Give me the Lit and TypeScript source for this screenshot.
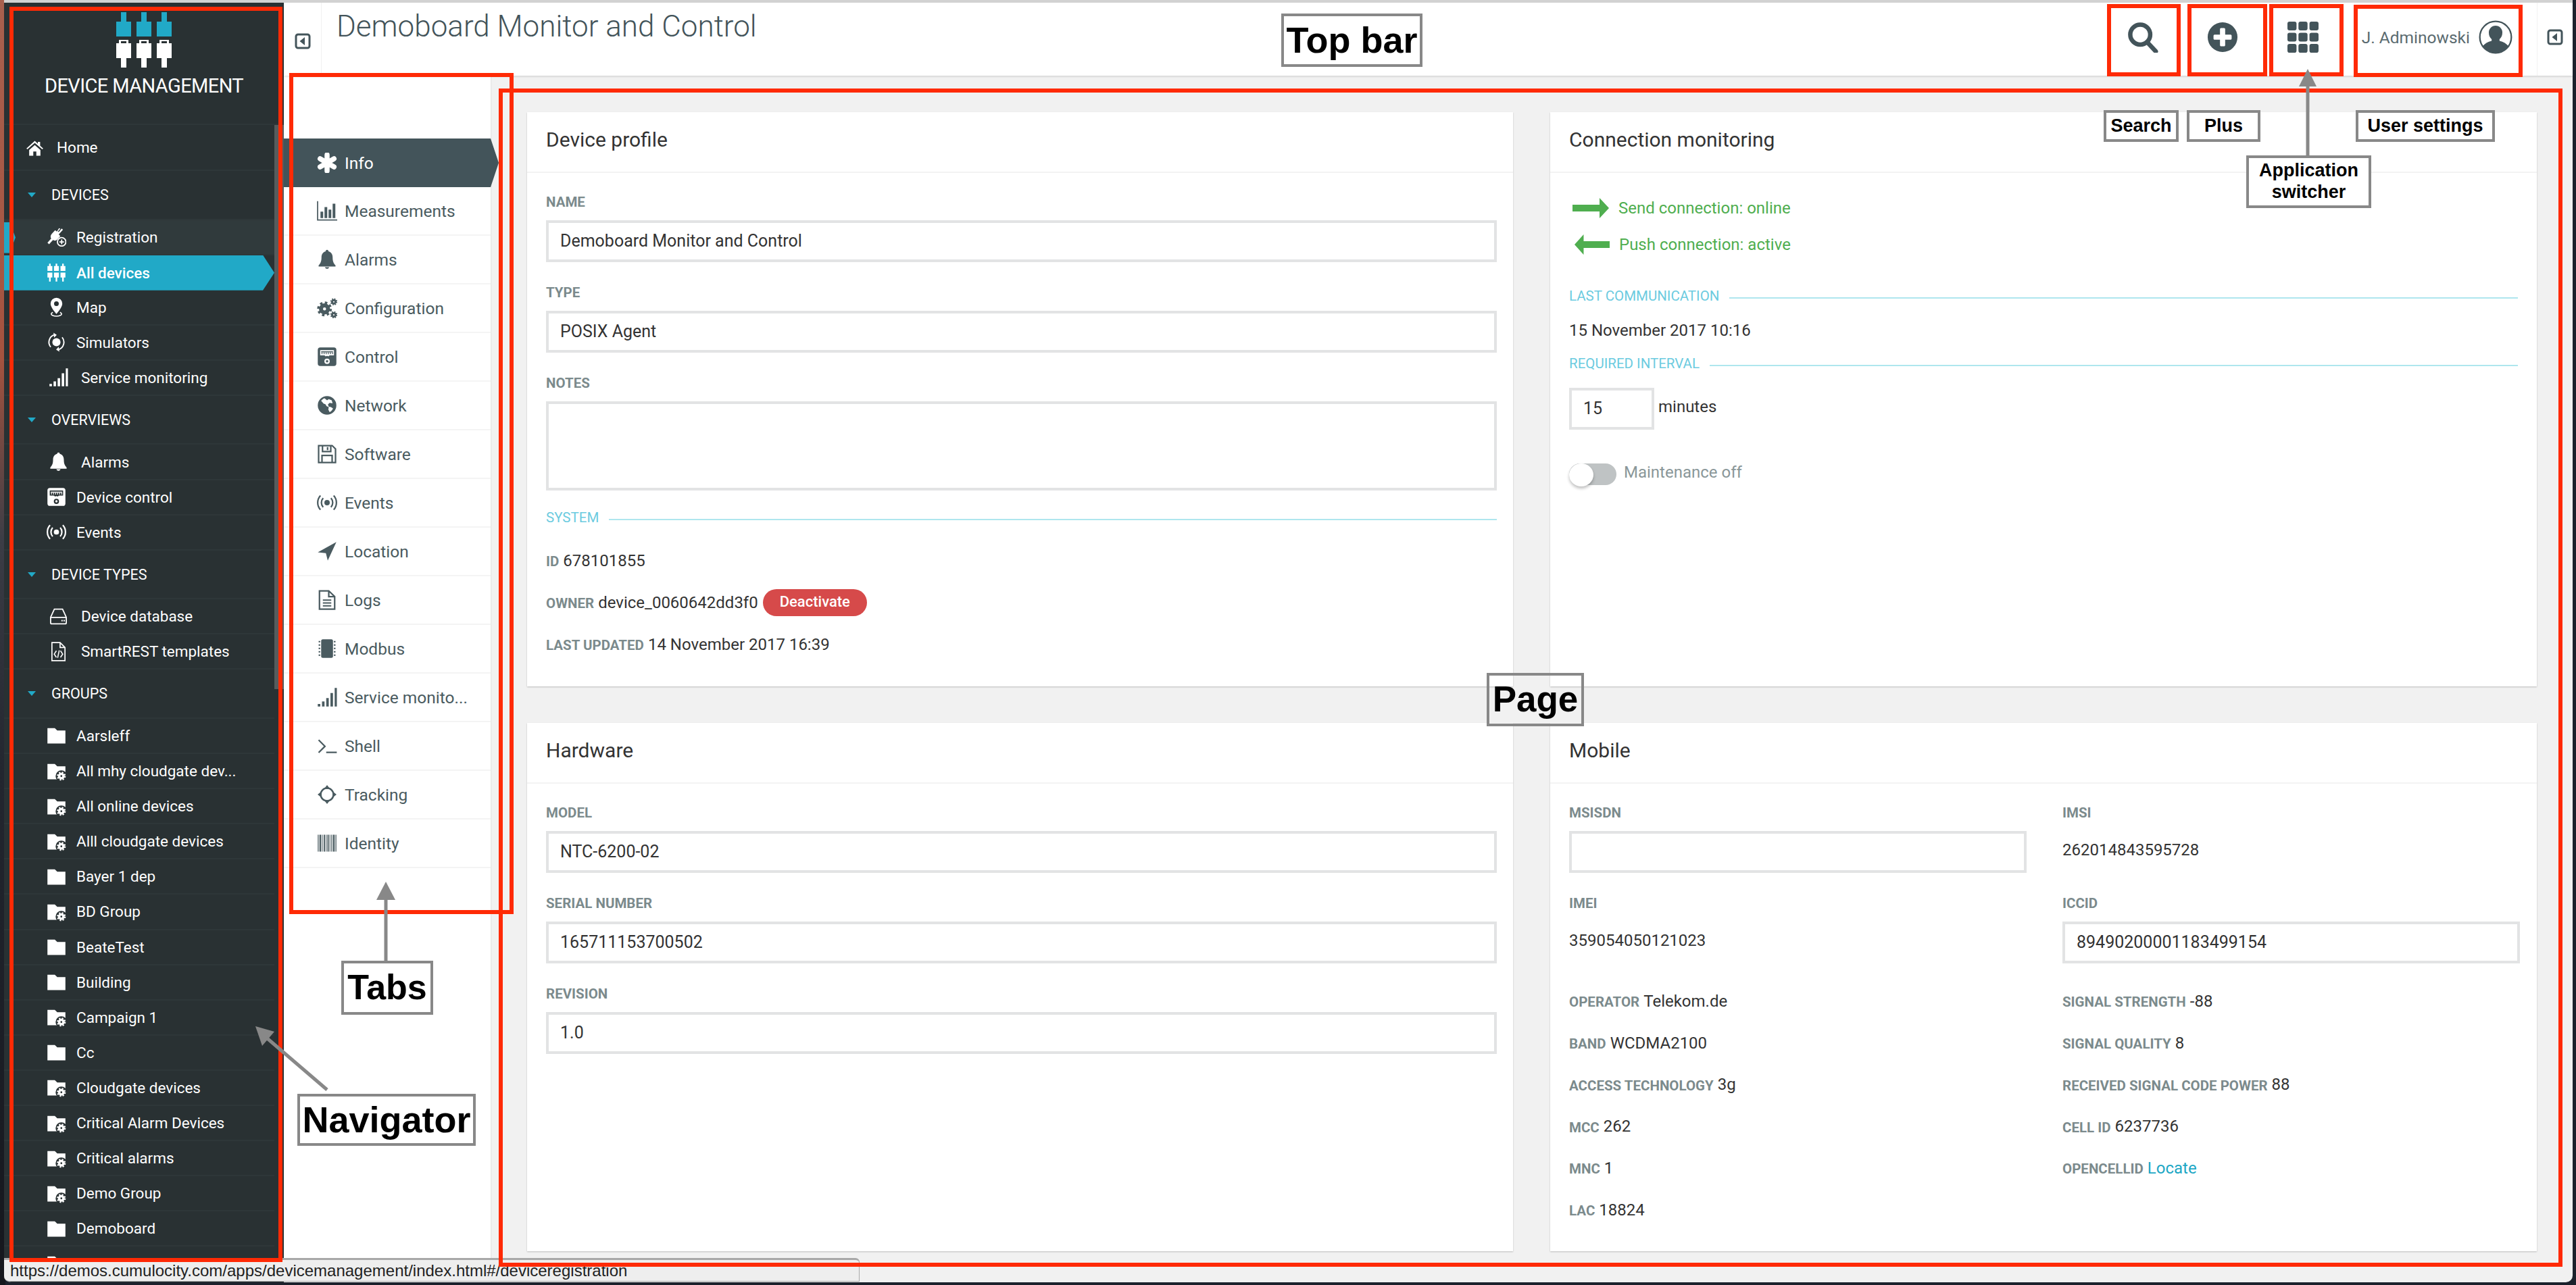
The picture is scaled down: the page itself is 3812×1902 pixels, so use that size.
import { LitElement, html, css, svg } from "lit";
import { customElement } from "lit/decorators.js";

const gear = (x: number, y: number, r: number) => svg`
  <circle cx=${x} cy=${y} r=${r * 0.6} fill="none" stroke="currentColor" stroke-width=${r * 0.68}></circle>
  <circle cx=${x} cy=${y} r=${r * 1.04} fill="none" stroke="currentColor" stroke-width=${r * 0.42} stroke-dasharray=${r * 0.41}></circle>`;

const folder = svg`<path d="M1 3h9l3 3h10v16H1z"></path>`;

const icons: Record<string, unknown> = {
  home: svg`<path d="M12 3.2 1 13l1.2 1.3L12 5.8l9.8 8.5L23 13l-4-3.5V4.4h-3v2.5zM4.6 15v7.6H10V17h4v5.6h5.4V15L12 8.6z"></path>`,
  plug: svg`<path d="M15.2 1.4 12.6 5.6 10.4 4 6.2 8.4c-1.6 1.700-1.700 3.900-.6 5.600L1 19.200 3 21l4.800-5c1.600 1 3.700.9 5.200-.6l3.800-4.200-2-2L20 3.400l-1.600-1.500-3.600 4.300-1-.8 3-3.400z"></path>
    <circle cx="18.4" cy="18.2" r="5.2" fill="none" stroke="currentColor" stroke-width="1.5"></circle>
    <path d="M17.7 15.4h1.500v2.100h2.100V19h-2.100v2.100h-1.500V19h-2.100v-1.500h2.100z"></path>`,
  devices: svg`<path d="M3 1h2v3h2v6H1V4h2zM11 1h2v3h2v6H9V4h2zM19 1h2v3h2v6h-6V4h2zM1 12h6v6H5v5H3v-5H1zM9 12h6v6h-2v5h-2v-5H9zM17 12h6v6h-2v5h-2v-5h-2z"></path>`,
  pin: svg`<path fill-rule="evenodd" d="M12 .6a7.200 7.200 0 0 0-7.200 7.200c0 4.200 5.200 10.200 7.200 12.600 2-2.400 7.200-8.400 7.200-12.600A7.200 7.200 0 0 0 12 .6zm0 4.400a2.900 2.900 0 1 1 0 5.800 2.900 2.900 0 0 1 0-5.800z"></path>
    <path d="M7.600 18.400c-1.300.6-2 1.300-2 2.100 0 1.400 2.900 2.600 6.400 2.600s6.400-1.200 6.400-2.600c0-.8-.7-1.500-2-2.100" fill="none" stroke="currentColor" stroke-width="1.300"></path>`,
  sim: svg`<circle cx="12" cy="12" r="5"></circle>
    <path d="M5 18A9.600 9.600 0 0 1 9 3M19 6a9.600 9.600 0 0 1-4 15" fill="none" stroke="currentColor" stroke-width="1.600"></path>
    <path d="m8.400.4 4 2.600-3.200 3.400zM15.600 23.600l-4-2.600 3.200-3.400z"></path>`,
  signal: svg`<path d="M1 20h3v3H1zM6 17h3v6H6zM11 13h3v10h-3zM16 7h3v16h-3zM21 1h2.600v22H21z"></path>`,
  bell: svg`<path d="M12 .6c-1 0-1.600.7-1.600 1.700C7 3.200 5.400 6 5.400 9.400c0 5-1.200 7.400-3.400 9.600v1.400h20V19c-2.200-2.200-3.400-4.600-3.400-9.600 0-3.400-1.600-6.200-5-7.100C13.600 1.300 13 .6 12 .6z"></path>
    <path d="M9.400 21.200a2.700 2.700 0 0 0 5.200 0z"></path>`,
  control: svg`<path fill-rule="evenodd" d="M4 1h16a3 3 0 0 1 3 3v16a3 3 0 0 1-3 3H4a3 3 0 0 1-3-3V4a3 3 0 0 1 3-3zm-.2 3.200v6.200h5.200l1.400 1.200a2.600 2.600 0 0 1 3.200 0l1.400-1.200h5.200V4.200zM12 14.200a3.200 3.200 0 1 0 0 6.400 3.200 3.200 0 0 0 0-6.400z"></path>
    <circle cx="12" cy="17.400" r="1.400"></circle>
    <path d="M5 5.500h14v1.300H5zM5.500 7h1v2h-1zM8 7h1v2H8zM10.500 7h1v2h-1zM13 7h1v2h-1zM15.500 7h1v2h-1zM18 7h1v2h-1z"></path>`,
  events: svg`<circle cx="12" cy="12" r="3.200"></circle>
    <path d="M7.400 6.600a8 8 0 0 0 0 10.800M16.600 6.600a8 8 0 0 1 0 10.800M4.200 3.600a12.400 12.400 0 0 0 0 16.800M19.800 3.600a12.400 12.400 0 0 1 0 16.800" fill="none" stroke="currentColor" stroke-width="1.800"></path>`,
  hdd: svg`<path d="M7 3h10l4.600 10v6.600a1.400 1.400 0 0 1-1.400 1.400H3.800a1.400 1.400 0 0 1-1.400-1.400V13zM2.800 13.200h18.400" fill="none" stroke="currentColor" stroke-width="1.500"></path>
    <path d="M15.600 16.200h1.600v1.800h-1.600zM18.200 16.200h1.600v1.800h-1.600z"></path>`,
  code: svg`<path d="M14 1H4v22h16V7zM14 1v6h6" fill="none" stroke="currentColor" stroke-width="1.400"></path>
    <path d="M9.500 11 6.800 15l2.700 4M14.500 11l2.700 4-2.700 4M13 10.400l-2 9.200" fill="none" stroke="currentColor" stroke-width="1.300"></path>`,
  folder,
  smart: svg`${folder}<circle cx="18" cy="18" r="7" style="fill:var(--cut,#293133)"></circle>${gear(18, 18, 4.4)}`,
  asterisk: svg`<path d="M12 2.500v19M3.800 7.200l16.400 9.600M20.200 7.200 3.800 16.800" fill="none" stroke="currentColor" stroke-width="6" stroke-linecap="round"></path>`,
  chart: svg`<path d="M.8 .5v22.300H24" fill="none" stroke="currentColor" stroke-width="1.400"></path>
    <path d="M4.200 13h3.200v7.500H4.200zM9 7.500h3.200v13H9zM13.800 10.500H17v10h-3.200zM18.600 3.500h3.200v17h-3.200z"></path>`,
  gears: svg`${gear(9, 13, 7)}${gear(20, 4.6, 3.4)}${gear(20, 20, 3.4)}`,
  globe: svg`<path fill-rule="evenodd" d="M12 1a11 11 0 1 1 0 22 11 11 0 0 1 0-22zM5 6.500l3 3.500 2 .5 1.500 2.500 2.500 1-.5 3 1.500 3c2-1 3.600-3 4-4.500l-2.500-1.500-2.500-.5-1-2.500 2-2 3.500.5-1-3.500-3.500-1.500-2 1.500L9 3.500C7.500 4 6 5.200 5 6.500z"></path>`,
  floppy: svg`<path d="M2 2h16l4 4v16H2zM6.600 2v7h9.800V2M6 22v-8.400h12V22M12.600 3.800v3.600" fill="none" stroke="currentColor" stroke-width="1.800"></path>`,
  arrow: svg`<path d="M23 1 1 13.200l9.600 1 2.200 8.800z"></path>`,
  file: svg`<path d="M14 1.200H3v21.600h18V8zM14 1.200V8h7" fill="none" stroke="currentColor" stroke-width="1.800"></path>
    <path d="M7 11.400h10v1.600H7zM7 14.800h10v1.600H7zM7 18.200h10v1.600H7z"></path>`,
  chip: svg`<rect x="5" y="1" width="14" height="22" rx="2"></rect>
    <path d="M2 3h2v1.500H2zM2 7h2v1.500H2zM2 11h2v1.500H2zM2 15h2v1.500H2zM2 19h2v1.500H2zM20 3h2v1.500h-2zM20 7h2v1.500h-2zM20 11h2v1.500h-2zM20 15h2v1.500h-2zM20 19h2v1.500h-2z"></path>`,
  shell: svg`<path d="m2 5 7.500 7.500L2 20" fill="none" stroke="currentColor" stroke-width="1.800"></path><path d="M11 18.800h12.500v1.800H11z"></path>`,
  track: svg`<circle cx="12" cy="12" r="7.600" fill="none" stroke="currentColor" stroke-width="2"></circle>
    <path d="m12 .8 3.600 4.600H8.400zM12 23.200l3.600-4.600H8.400zM.8 12l4.600-3.600v7.200zM23.200 12l-4.600-3.600v7.200z"></path>`,
  barcode: svg`<path d="M1 2h1v20H1zM3 2h2v20H3zM6 2h.8v20H6zM8 2h1.500v20H8zM10.500 2h.8v20h-.8zM12.400 2h1.600v20h-1.600zM15 2h.8v20H15zM17 2h1v20h-1zM19 2h2v20h-2zM22 2h1v20h-1z"></path>`,
  search: svg`<circle cx="10" cy="10" r="7.700" fill="none" stroke="currentColor" stroke-width="3.400"></circle><path d="m15.500 16 6.500 7" fill="none" stroke="currentColor" stroke-width="3.400" stroke-linecap="round"></path>`,
  plus: svg`<path fill-rule="evenodd" d="M12 .5a11.500 11.500 0 1 1 0 23 11.500 11.500 0 0 1 0-23zM10 5.800v4.200H5.800a.8.8 0 0 0-.8.8v2.400c0 .4.400.8.800.8H10v4.200c0 .4.400.8.800.8h2.400c.4 0 .8-.4.800-.8V14h4.200c.4 0 .8-.4.800-.8v-2.400a.8.8 0 0 0-.8-.8H14V5.800a.8.8 0 0 0-.8-.8h-2.400a.8.8 0 0 0-.8.8z"></path>`,
  grid: svg`<rect x="0" y="0" width="7" height="6.800" rx="1.600"></rect><rect x="8.500" y="0" width="7" height="6.800" rx="1.600"></rect><rect x="17" y="0" width="7" height="6.800" rx="1.600"></rect>
    <rect x="0" y="8.600" width="7" height="6.800" rx="1.600"></rect><rect x="8.500" y="8.600" width="7" height="6.800" rx="1.600"></rect><rect x="17" y="8.600" width="7" height="6.800" rx="1.600"></rect>
    <rect x="0" y="17.200" width="7" height="6.800" rx="1.600"></rect><rect x="8.500" y="17.200" width="7" height="6.800" rx="1.600"></rect><rect x="17" y="17.200" width="7" height="6.800" rx="1.600"></rect>`,
  user: svg`<circle cx="12" cy="12" r="11.200" fill="none" stroke="currentColor" stroke-width="1.100"></circle>
    <path d="M12 3.800a4.800 4.800 0 0 1 4.800 5.200c0 2-.9 3.500-2 4.400v1.200c2.800.7 5 2 6.200 3.600A11 11 0 0 1 12 23a11 11 0 0 1-9-4.800c1.200-1.600 3.400-2.900 6.200-3.600v-1.200c-1.100-.9-2-2.400-2-4.400A4.800 4.800 0 0 1 12 3.800z"></path>`,
  collapse: svg`<rect x="2" y="2" width="20" height="20" rx="3" fill="none" stroke="currentColor" stroke-width="3"></rect><path d="M15 6v12L7.500 12z"></path>`,
};

const icon = (name: string, cls = "") =>
  html`<svg class="ico ${cls}" viewBox="0 0 24 24" fill="currentColor" aria-hidden="true">${icons[name]}</svg>`;

const navSections = [
  {
    title: "DEVICES",
    items: [
      { label: "Registration", icon: "plug", marker: true },
      { label: "All devices", icon: "devices", active: true },
      { label: "Map", icon: "pin" },
      { label: "Simulators", icon: "sim" },
      { label: "Service monitoring", icon: "signal", shift: true },
    ],
  },
  {
    title: "OVERVIEWS",
    items: [
      { label: "Alarms", icon: "bell", shift: true },
      { label: "Device control", icon: "control" },
      { label: "Events", icon: "events" },
    ],
  },
  {
    title: "DEVICE TYPES",
    items: [
      { label: "Device database", icon: "hdd", shift: true },
      { label: "SmartREST templates", icon: "code", shift: true },
    ],
  },
  {
    title: "GROUPS",
    items: [
      { label: "Aarsleff", icon: "folder" },
      { label: "All mhy cloudgate dev...", icon: "smart" },
      { label: "All online devices", icon: "smart" },
      { label: "Alll cloudgate devices", icon: "smart" },
      { label: "Bayer 1 dep", icon: "folder" },
      { label: "BD Group", icon: "smart" },
      { label: "BeateTest", icon: "folder" },
      { label: "Building", icon: "folder" },
      { label: "Campaign 1", icon: "smart" },
      { label: "Cc", icon: "folder" },
      { label: "Cloudgate devices", icon: "smart" },
      { label: "Critical Alarm Devices", icon: "smart" },
      { label: "Critical alarms", icon: "smart" },
      { label: "Demo Group", icon: "smart" },
      { label: "Demoboard", icon: "folder" },
      { label: "", icon: "folder" },
    ],
  },
];

const tabs = [
  ["Info", "asterisk"],
  ["Measurements", "chart"],
  ["Alarms", "bell"],
  ["Configuration", "gears"],
  ["Control", "control"],
  ["Network", "globe"],
  ["Software", "floppy"],
  ["Events", "events"],
  ["Location", "arrow"],
  ["Logs", "file"],
  ["Modbus", "chip"],
  ["Service monito...", "signal"],
  ["Shell", "shell"],
  ["Tracking", "track"],
  ["Identity", "barcode"],
];

// annotations sit on top of the screenshot, so these are plain page coordinates
const frames = [
  [14, 10, 404, 1858],
  [428, 108, 332, 1245],
  [738, 131, 3054, 1744],
  [3118, 6, 109, 107],
  [3237, 6, 118, 107],
  [3358, 6, 110, 107],
  [3483, 7, 250, 107],
];

const callouts: [string, number, number, number, number, number][] = [
  ["Top bar", 1896, 20, 209, 79, 54],
  ["Page", 2200, 996, 144, 79, 53],
  ["Tabs", 505, 1422, 136, 80, 52],
  ["Navigator", 440, 1619, 264, 77, 54],
  ["Search", 3113, 163, 111, 47, 27],
  ["Plus", 3236, 163, 109, 47, 27],
  ["User settings", 3486, 163, 206, 47, 27],
  ["Application switcher", 3324, 230, 185, 78, 27],
];

@customElement("app-root")
export class AppRoot extends LitElement {
  static styles = css`
    :host {
      display: block;
      position: relative;
      width: 3812px;
      height: 1902px;
      overflow: hidden;
      font-family: Roboto, "Liberation Sans", sans-serif;
      color: #333;
      background:
        linear-gradient(180deg, #a8604e 0, #a5533f 28%, #3c3d46 42%, #23262f 60%, #15171d 100%) left top / 8px 100% no-repeat,
        #1c212c;
    }
    .ico {
      display: block;
      flex: none;
    }
    .window {
      display: flex;
      box-sizing: border-box;
      margin-left: 6px;
      width: 3801px;
      height: 1898px;
      border-top: 4px solid #d2d2d2;
      border-radius: 0 0 10px 10px;
      background: #f1f1f1;
      overflow: hidden;
    }

    .nav {
      display: flex;
      flex-direction: column;
      flex: none;
      width: 414px;
      background: #293133;
      color: #fff;
      --cut: #293133;
    }
    .brand {
      display: flex;
      flex-direction: column;
      align-items: center;
      flex: none;
      box-sizing: border-box;
      height: 181px;
      padding-top: 14px;
      border-bottom: 2px solid #2e3739;
    }
    .logo {
      width: 82px;
      height: 82px;
    }
    .app-name {
      margin-top: 8px;
      font-size: 29px;
      line-height: 38px;
      letter-spacing: -0.6px;
    }
    .nav-body {
      display: flex;
      flex: 1;
      min-height: 0;
    }
    .nav-list {
      flex: 1;
      overflow: hidden;
    }
    .scroll {
      flex: none;
      width: 14px;
    }
    .thumb {
      height: 835px;
      background: #565c5d;
    }
    .home {
      display: flex;
      align-items: center;
      box-sizing: border-box;
      height: 68px;
      padding-left: 32px;
      font-size: 22.5px;
      border-bottom: 2px solid #2e3739;
    }
    .home .ico {
      width: 27px;
      height: 27px;
      margin-right: 19px;
    }
    .sec {
      display: flex;
      align-items: center;
      box-sizing: border-box;
      height: 72.5px;
      padding-left: 35px;
      font-size: 21.5px;
      border-bottom: 2px solid #2e3739;
    }
    .caret {
      width: 0;
      height: 0;
      margin-right: 23px;
      border-left: 6px solid transparent;
      border-right: 6px solid transparent;
      border-top: 7px solid #21a9c7;
    }
    .item {
      display: flex;
      align-items: center;
      position: relative;
      box-sizing: border-box;
      height: 52.1px;
      padding-left: 63px;
      font-size: 22.5px;
      white-space: nowrap;
      border-bottom: 2px solid #2e3739;
    }
    .item .ico {
      width: 29px;
      height: 29px;
      margin-right: 15px;
    }
    .item.shift {
      padding-left: 66px;
    }
    .item.shift .ico {
      margin-right: 19px;
    }
    .item.marker {
      background: #303a3c;
    }
    .item.marker::before {
      content: "";
      position: absolute;
      left: 0;
      top: 3px;
      width: 17px;
      height: 46px;
      background: #21a9c7;
      clip-path: polygon(0 0, 8px 0, 100% 50%, 8px 100%, 0 100%);
    }
    .item.active {
      background: #21a9c7;
      border-bottom: 0;
      clip-path: polygon(0 0, calc(100% - 17px) 0, 100% 50%, calc(100% - 17px) 100%, 0 100%);
      font-weight: 500;
      --cut: #21a9c7;
    }

    .main {
      display: flex;
      flex-direction: column;
      flex: 1;
      min-width: 0;
    }
    .topbar {
      display: flex;
      flex: none;
      height: 108px;
      background: #fff;
      color: #43545a;
      box-shadow: 0 1px 3px rgba(0, 0, 0, 0.16);
      position: relative;
      z-index: 2;
    }
    .side-btn {
      display: flex;
      align-items: center;
      justify-content: center;
      flex: none;
      box-sizing: border-box;
      width: 56px;
      padding-top: 6px;
      border-right: 1px solid #f1f1f1;
    }
    .side-btn .ico {
      width: 24px;
      height: 24px;
    }
    .title {
      flex: 1;
      margin: 0;
      padding-left: 22px;
      font-size: 44px;
      font-weight: 300;
      line-height: 70px;
    }
    .action {
      display: flex;
      align-items: center;
      justify-content: center;
      flex: none;
      box-sizing: border-box;
      width: 118.5px;
      padding-bottom: 6px;
    }
    .action .ico {
      width: 46px;
      height: 46px;
    }
    .user {
      display: flex;
      align-items: center;
      gap: 13px;
      margin-left: 28px;
      padding-right: 36px;
      padding-bottom: 6px;
      font-size: 24.5px;
      color: #5b6b70;
    }
    .user .ico {
      width: 50px;
      height: 50px;
      color: #43545a;
    }
    .end-btn {
      width: 53px;
      border-right: 0;
      border-left: 1px solid #f1f1f1;
      padding-top: 0;
      padding-bottom: 6px;
      justify-content: center;
    }

    .content {
      display: flex;
      flex: 1;
      min-height: 0;
    }
    .tabs {
      flex: none;
      width: 306px;
      box-sizing: border-box;
      padding-top: 93px;
      background: #fff;
      box-shadow: 1px 0 2px rgba(0, 0, 0, 0.06);
      color: #4a5b60;
      position: relative;
      z-index: 1;
    }
    .tab {
      display: flex;
      align-items: center;
      box-sizing: border-box;
      height: 72px;
      padding-left: 49px;
      font-size: 24.5px;
      white-space: nowrap;
      border-bottom: 2px solid #f4f4f4;
    }
    .tab .ico {
      width: 30px;
      height: 30px;
      margin-right: 11px;
    }
    .tab.on {
      width: 318px;
      background: #43545a;
      color: #fff;
      border-bottom: 0;
      clip-path: polygon(0 0, 306px 0, 100% 50%, 306px 100%, 0 100%);
    }

    .page {
      display: grid;
      flex: 1;
      grid-template-columns: 1459px 1460px;
      grid-template-rows: 850px 782px;
      gap: 54px 55px;
      padding: 54px 0 0 54px;
    }
    .card {
      background: #fff;
      box-shadow: 0 1px 2px rgba(0, 0, 0, 0.22);
    }
    .card h2 {
      display: flex;
      align-items: center;
      box-sizing: border-box;
      height: 90px;
      margin: 0;
      padding: 0 28px 8px;
      font-size: 30px;
      font-weight: 400;
      border-bottom: 2px solid #f3f3f3;
    }
    .body {
      padding: 30px 28px 0;
    }
    .body.wide {
      padding-right: 24px;
    }
    .field {
      margin-bottom: 32px;
    }
    .lbl {
      display: block;
      font-size: 20.5px;
      font-weight: 700;
      line-height: 26px;
      color: #7b8a8c;
    }
    .field .lbl {
      margin-bottom: 14px;
    }
    .input {
      display: flex;
      align-items: center;
      box-sizing: border-box;
      height: 62px;
      padding: 0 17px 2px;
      font-size: 25px;
      border: 4px solid #e2e3e4;
    }
    .input.big {
      height: 132px;
    }
    .plain {
      display: flex;
      align-items: center;
      box-sizing: border-box;
      height: 62px;
      padding-bottom: 7px;
      font-size: 24px;
    }
    .system {
      margin-top: -5px;
    }
    .head-line {
      display: flex;
      align-items: center;
      gap: 15px;
      font-size: 20.5px;
      line-height: 26px;
      color: #6ccbe0;
    }
    .head-line::after {
      content: "";
      flex: 1;
      height: 2px;
      margin-top: 5px;
      background: #aee6ee;
    }
    .rows {
      margin-top: 20px;
    }
    .row {
      display: flex;
      align-items: center;
      gap: 6px;
      height: 62px;
      font-size: 24px;
      white-space: nowrap;
    }
    .row .lbl {
      line-height: 1;
      margin-top: 3px;
    }
    .pill {
      margin-left: 1px;
      padding: 0 25px;
      height: 40px;
      line-height: 38px;
      border-radius: 20px;
      background: #d64a4a;
      color: #fff;
      font-size: 22px;
      font-weight: 500;
    }
    .conn {
      display: flex;
      align-items: center;
      gap: 14px;
      height: 54px;
      padding-left: 5px;
      font-size: 24px;
      color: #4fae4f;
    }
    .conn svg {
      flex: none;
      width: 54px;
      height: 30px;
    }
    .conn.in {
      padding-left: 8px;
    }
    .conn.in svg {
      width: 52px;
    }
    .conn-wrap {
      margin-top: -5px;
    }
    .conn-wrap + .head-line {
      margin-top: 36px;
    }
    .when {
      margin: 25px 0 23px;
      font-size: 24px;
      line-height: 26px;
    }
    .interval {
      display: flex;
      align-items: center;
      gap: 6px;
      margin-top: 23px;
      font-size: 24px;
    }
    .interval .input {
      width: 126px;
    }
    .interval span {
      margin-bottom: 6px;
    }
    .switch {
      display: flex;
      align-items: flex-start;
      gap: 11px;
      margin-top: 50px;
      font-size: 24px;
      line-height: 26px;
      color: #8a9799;
    }
    .track {
      position: relative;
      width: 70px;
      height: 32px;
      border-radius: 16px;
      background: #bfc3c4;
    }
    .knob {
      position: absolute;
      left: 0;
      top: 0;
      width: 36px;
      height: 34px;
      border-radius: 50%;
      background: #fff;
      box-shadow: 0 3px 4px rgba(0, 0, 0, 0.25);
    }
    .two {
      display: grid;
      grid-template-columns: 677px 677px;
      column-gap: 53px;
    }
    .two .rows {
      margin-top: -7px;
    }
    .two .row {
      height: 61.8px;
    }
    .link {
      color: #1ea7c5;
    }

    .status {
      position: absolute;
      z-index: 3;
      left: 6px;
      top: 1862px;
      box-sizing: border-box;
      width: 1266px;
      height: 35px;
      padding-left: 9px;
      background: #eee;
      border: 1px solid #aaa;
      border-top: 3px solid #a8a8a8;
      border-left: 0;
      border-radius: 0 6px 0 8px;
      font-family: "Liberation Sans", sans-serif;
      font-size: 24px;
      line-height: 31px;
      color: #222;
      white-space: nowrap;
    }
    .frame {
      position: absolute;
      z-index: 4;
      box-sizing: border-box;
      border: 6px solid #ff2a05;
    }
    .callout {
      position: absolute;
      z-index: 5;
      display: flex;
      align-items: center;
      justify-content: center;
      box-sizing: border-box;
      border: 4px solid #888;
      background: #fff;
      color: #000;
      font-family: "Liberation Sans", sans-serif;
      font-weight: 700;
      line-height: 1.18;
      text-align: center;
    }
    .callout.clear {
      background: transparent;
    }
    .arrows {
      position: absolute;
      z-index: 5;
      left: 0;
      top: 0;
      width: 3812px;
      height: 1902px;
      pointer-events: none;
    }
  `;

  private renderNav() {
    return html`
      <nav class="nav">
        <div class="brand">
          <svg class="logo" viewBox="0 0 82 82" aria-hidden="true">
            <path fill="#21a9c7" d="M7 0h8v14h7v22H0V14h7zM37 0h8v14h7v22H30V14h7zM67 0h8v14h7v22H60V14h7z"></path>
            <path fill="#fff" fill-rule="evenodd" d="M4 41h14v5h4v22h-7v14H7V68H0V46h4zm3 2v3h8v-3zM34 41h14v5h4v22h-7v14h-8V68h-7V46h4zm3 2v3h8v-3zM64 41h14v5h4v22h-7v14h-8V68h-7V46h4zm3 2v3h8v-3z"></path>
          </svg>
          <div class="app-name">DEVICE MANAGEMENT</div>
        </div>
        <div class="nav-body">
          <div class="nav-list">
            <div class="home">${icon("home")}Home</div>
            ${navSections.map(
              (s) => html`
                <div class="sec"><span class="caret"></span>${s.title}</div>
                ${s.items.map(
                  (i: any) => html`
                    <div class="item ${i.shift ? "shift" : ""} ${i.marker ? "marker" : ""} ${i.active ? "active" : ""}">
                      ${icon(i.icon)}${i.label}
                    </div>
                  `
                )}
              `
            )}
          </div>
          <div class="scroll"><div class="thumb"></div></div>
        </div>
      </nav>
    `;
  }

  private renderTopbar() {
    return html`
      <header class="topbar">
        <div class="side-btn">${icon("collapse")}</div>
        <h1 class="title">Demoboard Monitor and Control</h1>
        <div class="action">${icon("search")}</div>
        <div class="action">${icon("plus")}</div>
        <div class="action">${icon("grid")}</div>
        <div class="user">J. Adminowski ${icon("user")}</div>
        <div class="side-btn end-btn">${icon("collapse")}</div>
      </header>
    `;
  }

  private field(label: string, value: string, cls = "") {
    return html`
      <div class="field">
        <span class="lbl">${label}</span>
        <div class="input ${cls}">${value}</div>
      </div>
    `;
  }

  private plain(label: string, value: string) {
    return html`
      <div class="field">
        <span class="lbl">${label}</span>
        <div class="plain">${value}</div>
      </div>
    `;
  }

  private row(label: string, value: unknown) {
    return html`<div class="row"><span class="lbl">${label}</span><span>${value}</span></div>`;
  }

  private renderCards() {
    return html`
      <main class="page">
        <section class="card">
          <h2>Device profile</h2>
          <div class="body wide">
            ${this.field("NAME", "Demoboard Monitor and Control")}
            ${this.field("TYPE", "POSIX Agent")}
            ${this.field("NOTES", "", "big")}
            <div class="system">
              <div class="head-line">SYSTEM</div>
              <div class="rows">
                ${this.row("ID", "678101855")}
                <div class="row">
                  <span class="lbl">OWNER</span><span>device_0060642dd3f0</span>
                  <span class="pill">Deactivate</span>
                </div>
                ${this.row("LAST UPDATED", "14 November 2017 16:39")}
              </div>
            </div>
          </div>
        </section>

        <section class="card">
          <h2>Connection monitoring</h2>
          <div class="body">
            <div class="conn-wrap">
              <div class="conn">
                <svg viewBox="0 0 54 30" aria-hidden="true"><path fill="#4fae4f" d="M0 10h40V0l14 15-14 15V20H0z"></path></svg>
                Send connection: online
              </div>
              <div class="conn in">
                <svg viewBox="0 0 54 30" preserveAspectRatio="none" aria-hidden="true"><path fill="#4fae4f" d="M54 10H14V0L0 15l14 15V20h40z"></path></svg>
                Push connection: active
              </div>
            </div>
            <div class="head-line">LAST COMMUNICATION</div>
            <div class="when">15 November 2017 10:16</div>
            <div class="head-line">REQUIRED INTERVAL</div>
            <div class="interval"><div class="input">15</div><span>minutes</span></div>
            <div class="switch">
              <div class="track"><div class="knob"></div></div>
              Maintenance off
            </div>
          </div>
        </section>

        <section class="card">
          <h2>Hardware</h2>
          <div class="body wide">
            ${this.field("MODEL", "NTC-6200-02")}
            ${this.field("SERIAL NUMBER", "165711153700502")}
            ${this.field("REVISION", "1.0")}
          </div>
        </section>

        <section class="card">
          <h2>Mobile</h2>
          <div class="body">
            <div class="two">
              ${this.field("MSISDN", "")} ${this.plain("IMSI", "262014843595728")}
              ${this.plain("IMEI", "359054050121023")} ${this.field("ICCID", "89490200001183499154")}
              <div class="rows">
                ${this.row("OPERATOR", "Telekom.de")}
                ${this.row("BAND", "WCDMA2100")}
                ${this.row("ACCESS TECHNOLOGY", "3g")}
                ${this.row("MCC", "262")}
                ${this.row("MNC", "1")}
                ${this.row("LAC", "18824")}
              </div>
              <div class="rows">
                ${this.row("SIGNAL STRENGTH", "-88")}
                ${this.row("SIGNAL QUALITY", "8")}
                ${this.row("RECEIVED SIGNAL CODE POWER", "88")}
                ${this.row("CELL ID", "6237736")}
                ${this.row("OPENCELLID", html`<span class="link">Locate</span>`)}
              </div>
            </div>
          </div>
        </section>
      </main>
    `;
  }

  render() {
    return html`
      <div class="window">
        ${this.renderNav()}
        <div class="main">
          ${this.renderTopbar()}
          <div class="content">
            <aside class="tabs">
              ${tabs.map(
                ([label, ico], i) => html`<div class="tab ${i === 0 ? "on" : ""}">${icon(ico)}${label}</div>`
              )}
            </aside>
            ${this.renderCards()}
          </div>
        </div>
      </div>

      <div class="status">https://demos.cumulocity.com/apps/devicemanagement/index.html#/deviceregistration</div>

      ${frames.map(
        ([x, y, w, h]) => html`<div class="frame" style="left:${x}px;top:${y}px;width:${w}px;height:${h}px"></div>`
      )}
      <svg class="arrows" viewBox="0 0 3812 1902" aria-hidden="true">
        <g fill="#888" stroke="#888">
          <path d="M571 1422V1325" stroke-width="5" fill="none"></path>
          <path d="M571 1305l14 27h-28z" stroke="none"></path>
          <path d="M484 1613 392 1534" stroke-width="5" fill="none"></path>
          <path d="M378 1519l28 8-18 21z" stroke="none"></path>
          <path d="M3415 230V122" stroke-width="5" fill="none"></path>
          <path d="M3415 102l13 26h-26z" stroke="none"></path>
        </g>
      </svg>
      ${callouts.map(
        ([text, x, y, w, h, size]) => html`
          <div
            class="callout ${text === "Page" ? "clear" : ""}"
            style="left:${x}px;top:${y}px;width:${w}px;height:${h}px;font-size:${size}px"
          >
            ${text}
          </div>
        `
      )}
    `;
  }
}
